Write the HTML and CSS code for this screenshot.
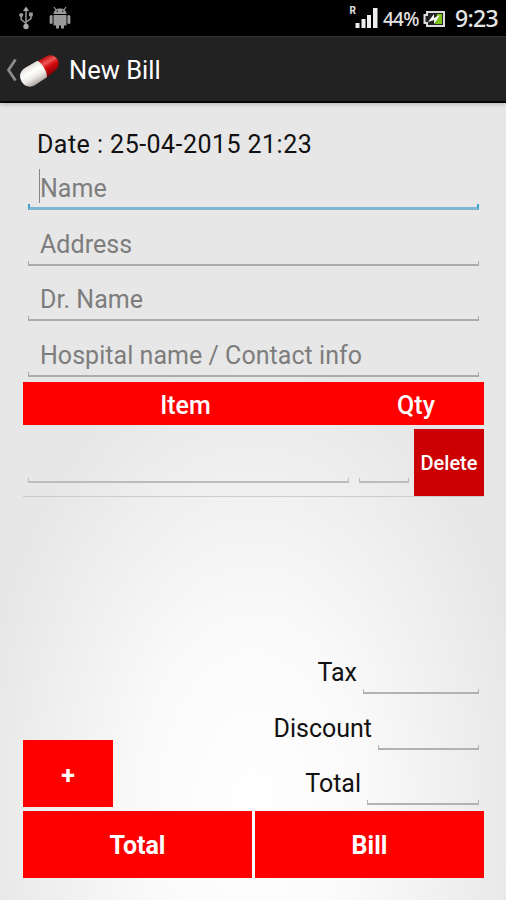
FILE: index.html
```html
<!DOCTYPE html>
<html>
<head>
    <meta charset="utf-8">
    <title>New Bill</title>
    <meta name="viewport" content="width=device-width, initial-scale=1.0">
    <link rel="stylesheet" href="styles.css">
</head>
<body>

<div class="statusbar">
    <svg class="usb" width="14" height="24" viewBox="0 0 14 24">
        <path d="M7 4v16M2.200 10v3.500L7 17.500M12 9v3.500L7 16" fill="none" stroke="#999" stroke-width="1.500"/>
        <path d="M7 0.500L10 5H4z" fill="#aaa"/>
        <rect x="10" y="6.500" width="3.800" height="3.800" fill="#999"/>
        <circle cx="2.200" cy="9" r="2.100" fill="#999"/>
        <circle cx="7" cy="20.500" r="2.700" fill="#aaa"/>
    </svg>
    <svg class="robot" width="22" height="24" viewBox="0 0 22 24">
        <path d="M5 1l2 3M17 1l-2 3" stroke="#999" stroke-width="1.200"/>
        <path d="M4.500 8C4.500 0.500 17.500 0.500 17.500 8z" fill="#999"/>
        <path d="M4.500 9h13v10.500h-2.500v3h-3v-3h-2v3h-3v-3h-2.500z" fill="#999"/>
        <rect x="0.600" y="9" width="3" height="9" rx="1.500" fill="#999"/>
        <rect x="18.400" y="9" width="3" height="9" rx="1.500" fill="#999"/>
        <circle cx="8.300" cy="5.300" r="0.800" fill="#222"/>
        <circle cx="13.700" cy="5.300" r="0.800" fill="#222"/>
    </svg>
    <span class="roaming">R</span>
    <svg class="signal" width="23" height="20" viewBox="0 0 23 20">
        <path d="M0.500 15h4v5h-4zM6.500 11h4v9h-4zM12 7h4v13h-4zM18 0h4.500v20h-4.500z" fill="#eee"/>
    </svg>
    <span class="percent">44%</span>
    <svg class="battery" width="22" height="16" viewBox="0 0 22 16">
        <path d="M4 1h17v14H4v-3H1.500V4H4z" fill="#222" stroke="#ddd" stroke-width="2"/>
        <path d="M14 3h5v10h-7z" fill="#7fc21c"/>
        <path d="M5 11l6-8v4l6-3-6 9V9z" fill="#fff"/>
    </svg>
    <span class="clock">9:23</span>
</div>

<div class="actionbar">
    <svg class="back" width="11" height="24" viewBox="0 0 11 24">
        <path d="M9.500 1.500L2.500 12l7 10.500" fill="none" stroke="#8a8a8a" stroke-width="2.800"/>
    </svg>
    <svg class="pill" width="44" height="36" viewBox="0 0 44 36">
        <defs>
            <linearGradient id="white" x1="0" y1="0" x2="0" y2="1">
                <stop offset="0" stop-color="#e2dfda"/>
                <stop offset="0.350" stop-color="#fff"/>
                <stop offset="0.650" stop-color="#ebe8e4"/>
                <stop offset="1" stop-color="#aaa39b"/>
            </linearGradient>
            <linearGradient id="red" x1="0" y1="0" x2="0" y2="1">
                <stop offset="0" stop-color="#b80c0c"/>
                <stop offset="0.300" stop-color="#f05454"/>
                <stop offset="0.550" stop-color="#d40b10"/>
                <stop offset="1" stop-color="#7e0000"/>
            </linearGradient>
        </defs>
        <g transform="translate(21.500 18.500) rotate(-30)">
            <path d="M3 -9h9c5 0 9 3.500 9 8.500S17 8 13 8L3 9.500z" fill="url(#red)"/>
            <path d="M3 -9.500L-11 -9.500c-6 0-10 4-10 10S-17 10.500 -11 10.500L3 9.500C6 5 6 -4 3 -9.500z" fill="url(#white)"/>
        </g>
    </svg>
    <h1>New Bill</h1>
</div>

<div class="content">
    <div class="date">Date : 25-04-2015 21:23</div>

    <div class="field focused"><span class="hint">Name</span><div class="line"></div></div>
    <div class="field"><span class="hint">Address</span><div class="line"></div></div>
    <div class="field"><span class="hint">Dr. Name</span><div class="line"></div></div>
    <div class="field"><span class="hint">Hospital name / Contact info</span><div class="line"></div></div>

    <div class="table-head">
        <span class="col-item">Item</span>
        <span class="col-qty">Qty</span>
    </div>
    <div class="table-row">
        <div class="line item"></div>
        <div class="line qty"></div>
        <button class="delete">Delete</button>
    </div>

    <div class="bottom">
        <button class="add">+</button>
        <div class="sums">
            <div class="sum"><label>Tax</label><div class="line tax"></div></div>
            <div class="sum"><label>Discount</label><div class="line discount"></div></div>
            <div class="sum"><label>Total</label><div class="line total"></div></div>
        </div>
    </div>
    <div class="actions">
        <button>Total</button>
        <button>Bill</button>
    </div>
</div>

</body>
</html>
```

FILE: styles.css
```css
* {
    box-sizing: border-box;
}
body {
    margin: 0;
    width: 506px;
    height: 900px;
    overflow: hidden;
    display: flex;
    flex-direction: column;
    font-family: Roboto, sans-serif;
    font-size: 25px;
    color: #111;
    background: radial-gradient(ellipse 275px 460px at 253px 810px, #fff 0%, #fafafa 40%, #e7e7e7 100%);
}
button {
    border: 0;
    padding: 2px 0 0;
    font-family: inherit;
    color: #fff;
    background-color: #f00;
}

/* status bar */
.statusbar {
    height: 36px;
    display: flex;
    align-items: center;
    padding: 0 8px 0 19px;
    background-color: #000;
    color: #e4e4e4;
}
.robot {
    margin-left: 16px;
}
.usb, .robot {
    margin-bottom: 1px;
}
.roaming {
    margin-left: auto;
    margin-bottom: 15px;
    font-size: 10px;
    font-weight: bold;
    line-height: 10px;
}
.signal {
    margin-left: -1px;
}
.percent {
    margin-left: 5px;
    width: 36px;
    font-size: 19px;
    line-height: 34px;
    padding-top: 2px;
    font-weight: 500;
    font-family: "Noto Sans", sans-serif;
    letter-spacing: -0.8px;
}
.battery {
    margin-left: 4px;
    margin-top: 2px;
}
.clock {
    margin-left: 10px;
    width: 43px;
    font-size: 23px;
    line-height: 34px;
    font-weight: 500;
    font-family: "Noto Sans", sans-serif;
    letter-spacing: -0.7px;
}

/* action bar */
.actionbar {
    height: 67px;
    flex: none;
    display: flex;
    align-items: center;
    padding-left: 6px;
    background-color: #222;
    border-top: 1px solid #303030;
    border-bottom: 2px solid #050505;
    box-shadow: 0 1px 5px rgba(0, 0, 0, 0.25);
}
.pill {
    margin-left: 1px;
}
.back, .pill {
    margin-top: 1px;
}
h1 {
    margin: 2px 0 0 7px;
    font-size: 25.5px;
    font-weight: normal;
    color: #fff;
}

/* form */
.content {
    flex: 1;
    display: flex;
    flex-direction: column;
    padding: 27px 22px 22px 23px;
}
.date {
    height: 28px;
    line-height: 30px;
    padding-left: 14px;
    letter-spacing: 0.46px;
    white-space: nowrap;
}
.field {
    height: 55.5px;
    flex: none;
    padding: 0 5px 4px;
    display: flex;
    flex-direction: column;
    justify-content: flex-end;
    color: #7d7d7d;
}
.hint {
    width: max-content;
    height: 34px;
    line-height: 38px;
    margin: 0 0 1px 12px;
    letter-spacing: 0.04px;
}
.line {
    height: 5px;
    border: 1px solid #ababab;
    border-width: 0 1px 2px;
}
.focused {
    height: 56px;
}
.focused .hint {
    border-left: 1px solid #888;
    margin-left: 11px;
    line-height: 40px;
}
.focused .line {
    height: 6px;
    border-color: #3fa0cb;
    border-width: 0 2px 3px;
    border-bottom-color: #7fb6d2;
}
.table-head {
    display: flex;
    height: 43px;
    flex: none;
    margin-top: 1px;
    line-height: 47px;
    background-color: #f00;
    color: #fff;
    text-align: center;
    font-weight: 500;
}
.col-item {
    width: 325px;
}
.col-qty {
    width: 136px;
}
.table-row {
    display: flex;
    align-items: flex-end;
    height: 72px;
    flex: none;
    padding-left: 5px;
    border-bottom: 1px solid #ccc;
}
.table-row .line {
    margin-bottom: 13px;
    border-color: #bcbcbc;
}
.item {
    width: 321px;
}
.qty {
    width: 50px;
    margin-left: 10px;
}
.delete {
    width: 70px;
    height: 67px;
    margin: 0 0 0 auto;
    background-color: #c00;
    font-size: 20px;
    font-weight: 500;
}

/* totals */
.bottom {
    display: flex;
    justify-content: space-between;
    align-items: flex-end;
    margin-top: auto;
    margin-bottom: 4px;
}
.add {
    width: 90px;
    height: 67px;
    padding-top: 4px;
    font-size: 25px;
    font-weight: bold;
}
.sums {
    padding-right: 5px;
    padding-bottom: 2px;
}
.sum {
    display: flex;
    justify-content: flex-end;
    align-items: flex-end;
    height: 55.5px;
}
.sum label {
    line-height: 30px;
    margin: 0 6px 6px 0;
}
.sum .line {
    border-color: #b2b2b2;
}
.tax {
    width: 116px;
}
.discount {
    width: 101px;
}
.total {
    width: 112px;
}
.actions {
    display: flex;
    gap: 3px;
}
.actions button {
    flex: 1;
    height: 67px;
    font-size: 25px;
    font-weight: bold;
}
```
